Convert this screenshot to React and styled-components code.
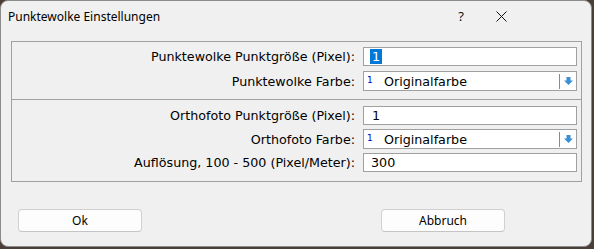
import React from "react";
import styled, { createGlobalStyle } from "styled-components";

const GlobalStyle = createGlobalStyle`
  html, body {
    margin: 0;
    padding: 0;
    background: #4a3c36;
  }
`;

const Window = styled.div`
  box-sizing: border-box;
  width: 592px;
  height: 247px;
  background: #f0f0f0;
  border: 1px solid #8c8c8c;
  border-radius: 8px;
  display: flex;
  flex-direction: column;
  overflow: hidden;
`;

const TitleBar = styled.div`
  height: 30px;
  display: flex;
  align-items: center;
  padding-left: 7px;
  padding-right: 70px;
  font-family: "Noto Sans", "Open Sans", sans-serif;
  font-size: 12px;
  color: #000;
`;

const Title = styled.span`
  flex: 1;
`;

const TitleButton = styled.div`
  width: ${(p) => p.$w}px;
  height: 30px;
  display: flex;
  align-items: center;
  justify-content: center;
  font-family: "Noto Sans", sans-serif;
  font-size: 13px;
  color: #111;
`;

const Content = styled.div`
  padding: 10px 9px 0 10px;
`;

const GroupBox = styled.div`
  border: 1px solid #a0a0a0;
`;

const Section = styled.div`
  display: grid;
  grid-template-columns: 343px 214px;
  column-gap: 8px;
  row-gap: ${(p) => p.$gap}px;
  padding: ${(p) => p.$pad};
  & + & {
    border-top: 1px solid #a0a0a0;
  }
`;

const Label = styled.label`
  display: flex;
  align-items: center;
  justify-content: flex-end;
  font-family: "DejaVu Sans", sans-serif;
  font-size: 12.7px;
  color: #000;
  white-space: nowrap;
`;

const Field = styled.div`
  box-sizing: border-box;
  height: ${(p) => p.$h || 19}px;
  background: #fff;
  border: 1px solid #a0a0a0;
  display: flex;
  align-items: center;
  padding-left: ${(p) => p.$pl || 6}px;
  font-family: "DejaVu Sans", sans-serif;
  font-size: 12.7px;
  color: #000;
`;

const Selected = styled.span`
  background: #0078d7;
  color: #fff;
  padding: 1px 2px;
  line-height: 13px;
`;

const Index = styled.span`
  font-family: "DejaVu Sans", sans-serif;
  font-size: 9px;
  color: #0000c8;
  width: 17px;
  align-self: flex-start;
  margin-top: 3px;
`;

const ComboText = styled.span`
  flex: 1;
`;

const DropButton = styled.div`
  width: 17px;
  height: 15px;
  display: flex;
  align-items: center;
  justify-content: center;
  border-left: 1px solid #8a8a8a;
  box-sizing: border-box;
`;

const Footer = styled.div`
  display: flex;
  justify-content: space-between;
  padding: 27px 86px 0 17px;
`;

const Button = styled.button`
  box-sizing: border-box;
  width: 124px;
  height: 23px;
  background: #fdfdfd;
  border: 1px solid #d0d0d0;
  border-bottom-color: #c4c4c4;
  border-radius: 4px;
  font-family: "Noto Sans", "Open Sans", sans-serif;
  font-size: 12px;
  color: #000;
  padding: 0;
`;

const Arrow = () => (
  <svg width="9" height="8" viewBox="0 0 9 8">
    <path d="M2.5 0h4v3.5H9L4.5 8 0 3.5h2.5z" fill="#3a8fd2" />
  </svg>
);

const CloseIcon = () => (
  <svg width="11" height="11" viewBox="0 0 11 11">
    <path d="M0.5 0.5l10 10M10.5 0.5l-10 10" stroke="#111" strokeWidth="1" />
  </svg>
);

const Combo = ({ value }) => (
  <Field $h={20} $pl={3}>
    <Index>1</Index>
    <ComboText>{value}</ComboText>
    <DropButton>
      <Arrow />
    </DropButton>
  </Field>
);

export default function App() {
  return (
    <>
      <GlobalStyle />
      <Window>
        <TitleBar>
          <Title>Punktewolke Einstellungen</Title>
          <TitleButton $w={40}>?</TitleButton>
          <TitleButton $w={40}>
            <CloseIcon />
          </TitleButton>
        </TitleBar>
        <Content>
          <GroupBox>
            <Section $gap={5} $pad="5px 5px 8px 0">
              <Label>Punktewolke Punktgröße (Pixel):</Label>
              <Field>
                <Selected>1</Selected>
              </Field>
              <Label>Punktewolke Farbe:</Label>
              <Combo value="Originalfarbe" />
            </Section>
            <Section $gap={4} $pad="6px 5px 9px 0">
              <Label>Orthofoto Punktgröße (Pixel):</Label>
              <Field $pl={8}>1</Field>
              <Label>Orthofoto Farbe:</Label>
              <Combo value="Originalfarbe" />
              <Label>Auflösung, 100 - 500 (Pixel/Meter):</Label>
              <Field $pl={7}>300</Field>
            </Section>
          </GroupBox>
        </Content>
        <Footer>
          <Button>Ok</Button>
          <Button>Abbruch</Button>
        </Footer>
      </Window>
    </>
  );
}
